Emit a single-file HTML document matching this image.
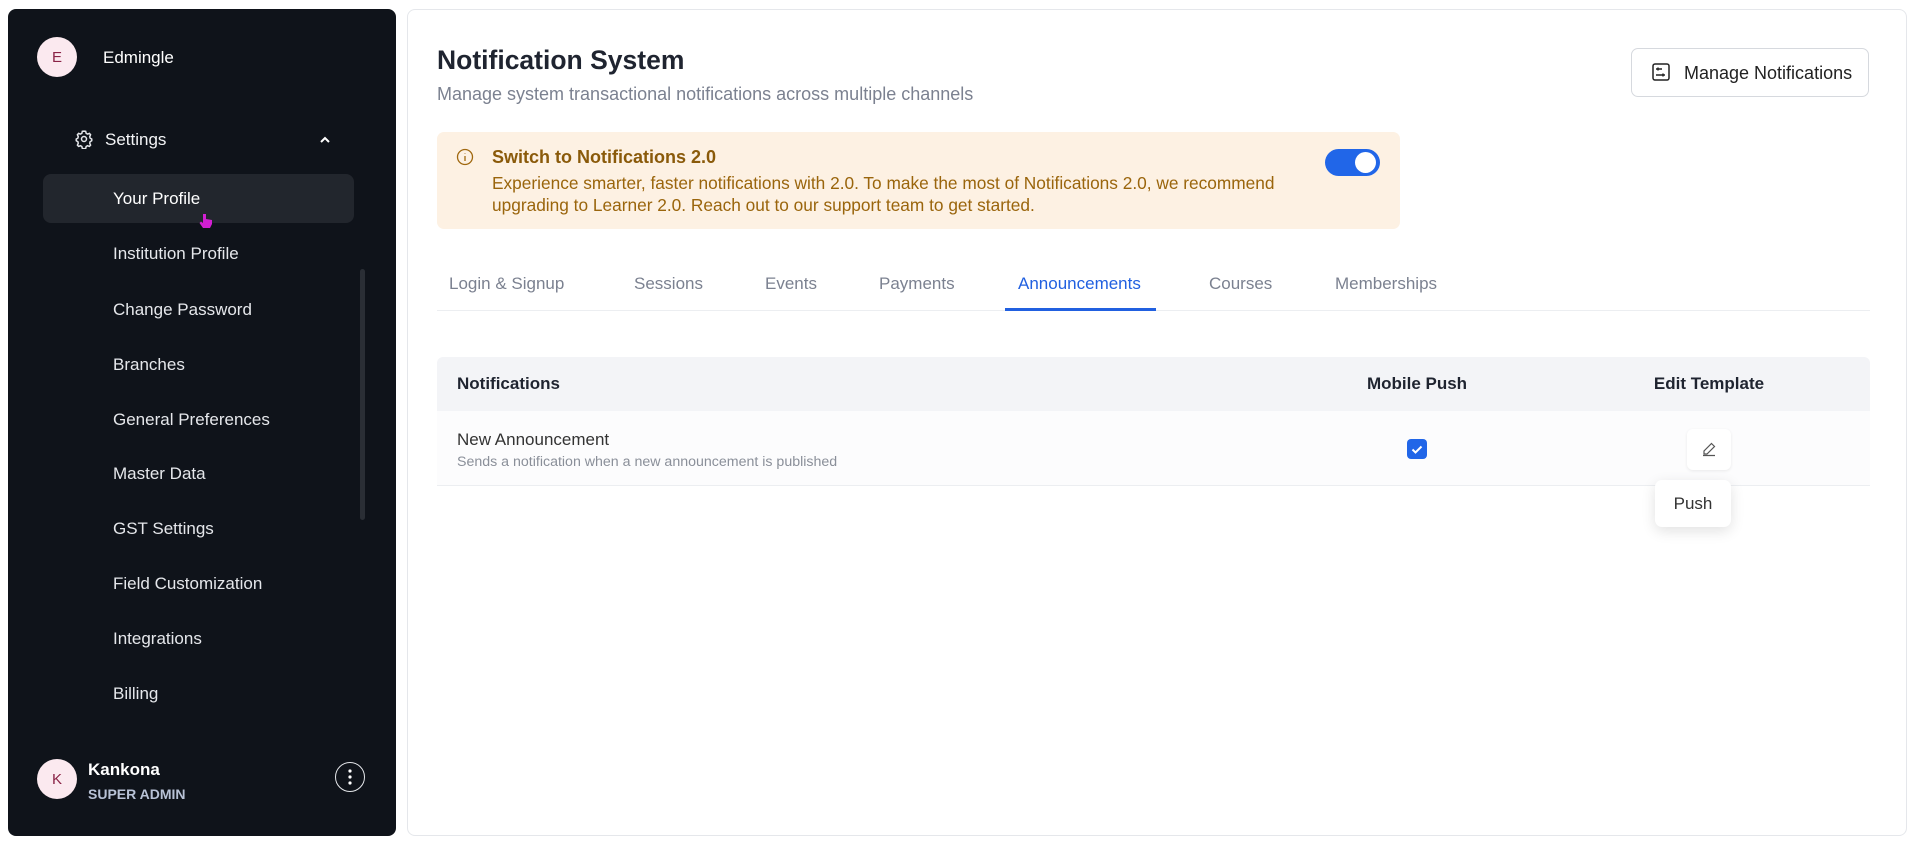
<!DOCTYPE html>
<html><head><meta charset="utf-8"><style>
*{box-sizing:border-box;margin:0;padding:0}
body{width:1920px;height:846px;background:#fff;font-family:"Liberation Sans",sans-serif;position:relative;overflow:hidden}
.sb{position:absolute;left:8px;top:9px;width:388px;height:827px;background:#0f131a;border-radius:8px;color:#f3f4f6}
.av{position:absolute;width:40px;height:40px;border-radius:50%;background:#fbe9ef;color:#8a2346;font-size:15px;display:flex;align-items:center;justify-content:center}
.mi{position:absolute;left:105px;font-size:17px;color:#e5e7eb}
.main{position:absolute;left:407px;top:9px;width:1500px;height:827px;border:1px solid #e5e7eb;border-radius:8px}
.a{position:absolute}
.tab{position:absolute;top:274px;font-size:17px;color:#7b8190}
</style></head><body>
<div class="sb">
 <div class="av" style="left:29px;top:28px">E</div>
 <div class="a" style="left:95px;top:39px;font-size:17px;color:#fff">Edmingle</div>
 <svg class="a" style="left:66px;top:120px" width="20" height="20" viewBox="0 0 24 24" fill="none" stroke="#e5e7eb" stroke-width="1.8"><circle cx="12" cy="12" r="3"/><path d="M12 2.5l2 .3.6 2.4 1.6.9 2.3-.8 1.4 1.6-1 2.2.4 1.8 2 1.2v2l-2 1.2-.4 1.8 1 2.2-1.4 1.6-2.3-.8-1.6.9-.6 2.4-2 .3-2-.3-.6-2.4-1.6-.9-2.3.8-1.4-1.6 1-2.2-.4-1.8-2-1.2v-2l2-1.2.4-1.8-1-2.2 1.4-1.6 2.3.8 1.6-.9.6-2.4z"/></svg>
 <div class="a" style="left:97px;top:121px;font-size:17px;color:#f3f4f6">Settings</div>
 <svg class="a" style="left:310px;top:125px" width="14" height="12" viewBox="0 0 14 12"><path d="M3 8l4-4 4 4" stroke="#fff" stroke-width="2" fill="none"/></svg>
 <div class="a" style="left:35px;top:165px;width:311px;height:49px;background:#22262d;border-radius:8px"></div>
 <div class="a" style="left:352px;top:260px;width:5px;height:251px;background:#2a2e35;border-radius:3px"></div>
 <div class="mi" style="left:105px;top:180px;color:#fff">Your Profile</div>
 <div class="mi" style="top:235px">Institution Profile</div>
 <div class="mi" style="top:291px">Change Password</div>
 <div class="mi" style="top:346px">Branches</div>
 <div class="mi" style="top:401px">General Preferences</div>
 <div class="mi" style="top:455px">Master Data</div>
 <div class="mi" style="top:510px">GST Settings</div>
 <div class="mi" style="top:565px">Field Customization</div>
 <div class="mi" style="top:620px">Integrations</div>
 <div class="mi" style="top:675px">Billing</div>
 <div class="av" style="left:29px;top:750px">K</div>
 <div class="a" style="left:80px;top:751px;font-size:17px;font-weight:bold;color:#fff">Kankona</div>
 <div class="a" style="left:80px;top:777px;font-size:14px;font-weight:bold;color:#b8c2d6">SUPER ADMIN</div>
 <div class="a" style="left:327px;top:753px;width:30px;height:30px;border:1.5px solid #e5e7eb;border-radius:50%"></div>
 <svg class="a" style="left:327px;top:753px" width="30" height="30"><circle cx="15" cy="9" r="1.6" fill="#fff"/><circle cx="15" cy="15" r="1.6" fill="#fff"/><circle cx="15" cy="21" r="1.6" fill="#fff"/></svg>
</div>
<div class="main"></div>
<div class="a" style="left:437px;top:45px;font-size:26.5px;font-weight:bold;color:#1f2430">Notification System</div>
<div class="a" style="left:437px;top:84px;font-size:18px;color:#7b8190">Manage system transactional notifications across multiple channels</div>
<div class="a" style="left:1631px;top:48px;width:238px;height:49px;border:1px solid #d6d9de;border-radius:7px"></div>
<svg class="a" style="left:1651px;top:62px" width="20" height="20" viewBox="0 0 20 20" fill="none" stroke="#222" stroke-width="1.5"><rect x="2" y="2" width="16" height="16" rx="2"/><path d="M5 7h6M5 13h9M7 5.5v3M12 11.5v3"/></svg>
<div class="a" style="left:1684px;top:63px;font-size:18px;color:#222">Manage Notifications</div>
<div class="a" style="left:437px;top:132px;width:963px;height:97px;background:#fdf1e3;border-radius:7px"></div>
<svg class="a" style="left:456px;top:148px" width="18" height="18" viewBox="0 0 18 18" fill="none" stroke="#a0680f" stroke-width="1.3"><circle cx="9" cy="9" r="7.5"/><path d="M9 8v5M9 5.2v.6"/></svg>
<div class="a" style="left:492px;top:147px;font-size:18px;font-weight:bold;color:#8a5a0a">Switch to Notifications 2.0</div>
<div class="a" style="left:492px;top:172px;font-size:17.3px;line-height:22px;color:#9a650c">Experience smarter, faster notifications with 2.0. To make the most of Notifications 2.0, we recommend<br>upgrading to Learner 2.0. Reach out to our support team to get started.</div>
<div class="a" style="left:1325px;top:149px;width:55px;height:27px;background:#2166e8;border-radius:14px"><div class="a" style="left:30px;top:3px;width:21px;height:21px;background:#fff;border-radius:50%"></div></div>
<div class="tab" style="left:449px">Login &amp; Signup</div>
<div class="tab" style="left:634px">Sessions</div>
<div class="tab" style="left:765px">Events</div>
<div class="tab" style="left:879px">Payments</div>
<div class="tab" style="left:1018px;color:#2160e0">Announcements</div>
<div class="tab" style="left:1209px">Courses</div>
<div class="tab" style="left:1335px">Memberships</div>
<div class="a" style="left:437px;top:310px;width:1433px;height:1px;background:#eceef1"></div>
<div class="a" style="left:1005px;top:308px;width:151px;height:3px;background:#2160e0"></div>
<div class="a" style="left:437px;top:357px;width:1433px;height:54px;background:#f3f4f7;border-radius:6px 6px 0 0"></div>
<div class="a" style="left:457px;top:374px;font-size:17px;font-weight:bold;color:#1f2430">Notifications</div>
<div class="a" style="left:1317px;width:200px;text-align:center;top:374px;font-size:17px;font-weight:bold;color:#1f2430">Mobile Push</div>
<div class="a" style="left:1609px;width:200px;text-align:center;top:374px;font-size:17px;font-weight:bold;color:#1f2430">Edit Template</div>
<div class="a" style="left:437px;top:411px;width:1433px;height:75px;background:#fcfcfd;border-bottom:1px solid #eceef1"></div>
<div class="a" style="left:457px;top:430px;font-size:17px;color:#333">New Announcement</div>
<div class="a" style="left:457px;top:454px;font-size:14.2px;color:#8a8f99">Sends a notification when a new announcement is published</div>
<div class="a" style="left:1407px;top:439px;width:20px;height:20px;background:#2166e8;border-radius:4px"></div>
<svg class="a" style="left:1407px;top:439px" width="20" height="20"><path d="M5.5 10.5l3 3 6-6" stroke="#fff" stroke-width="2" fill="none"/></svg>
<div class="a" style="left:1687px;top:429px;width:44px;height:41px;background:#fff;border-radius:6px;box-shadow:0 1px 3px rgba(0,0,0,.08)"></div>
<svg class="a" style="left:1701px;top:441px" width="16" height="16" viewBox="0 0 16 16" fill="none" stroke="#555" stroke-width="1.2"><path d="M10.5 2.5l3 3-7.5 7.5H3v-3zM2 14.5h12"/></svg>
<div class="a" style="left:1655px;top:480px;width:76px;height:47px;background:#fff;border-radius:7px;box-shadow:0 4px 14px rgba(0,0,0,.12);font-size:17px;color:#333;text-align:center;line-height:47px">Push</div>
<svg class="a" style="left:198px;top:212px" width="16" height="20" viewBox="0 0 16 20"><path d="M5 2v9l-2-1.5L1.5 11 5 16h7l2-4v-4l-6-1V2z" fill="#d21fd2"/></svg>
</body></html>
